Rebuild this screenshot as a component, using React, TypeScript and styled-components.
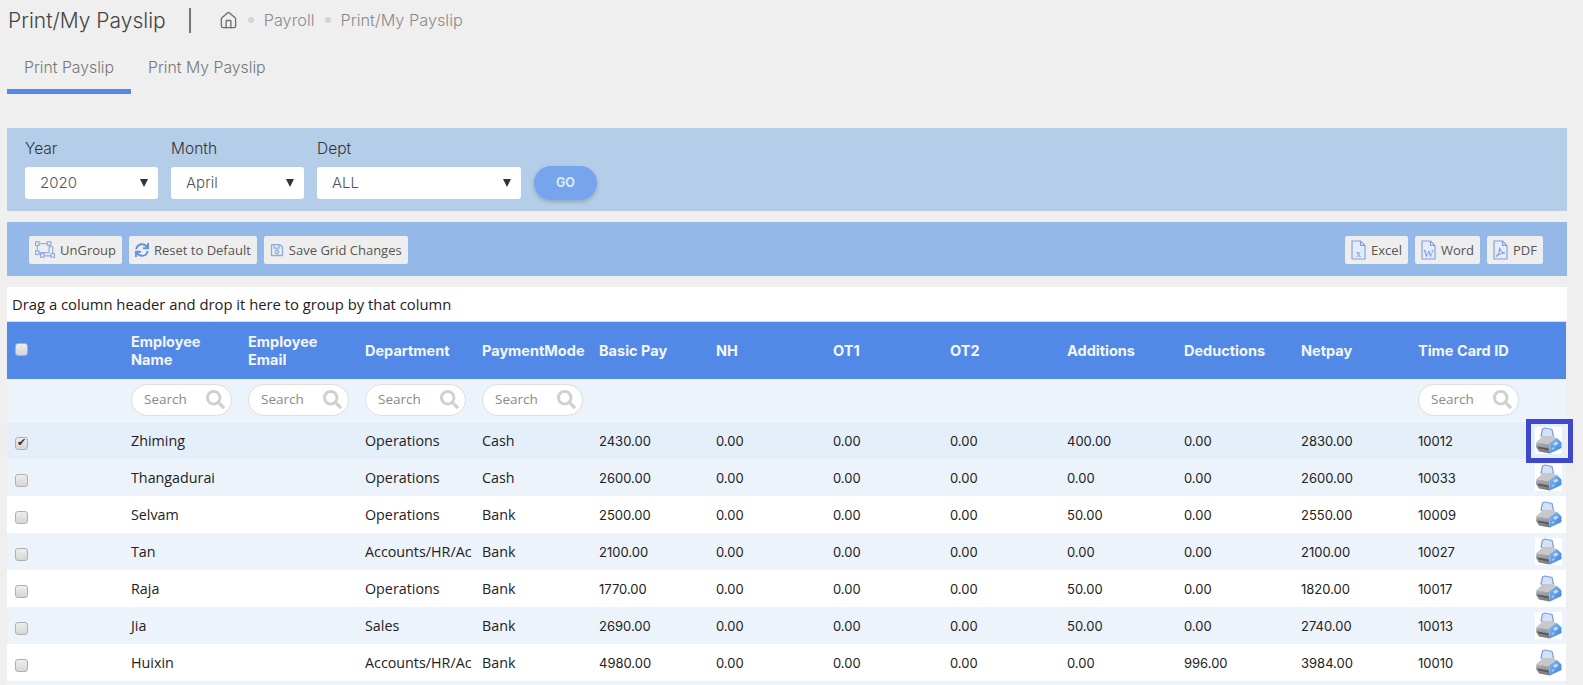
import React from 'react';
import styled, { createGlobalStyle } from 'styled-components';
import { Home } from 'lucide-react';
import { FaSync, FaRegSave, FaSearch } from 'react-icons/fa';

const sans = `"Open Sans", "Noto Sans", sans-serif`;
const geo = `Inter, "Open Sans", sans-serif`;

type Row = {
  name: string;
  dept: string;
  mode: string;
  basic: string;
  additions: string;
  deductions: string;
  net: string;
  card: string;
  checked?: boolean;
};

const rows: Row[] = [
  { name: 'Zhiming', dept: 'Operations', mode: 'Cash', basic: '2430.00', additions: '400.00', deductions: '0.00', net: '2830.00', card: '10012', checked: true },
  { name: 'Thangadurai', dept: 'Operations', mode: 'Cash', basic: '2600.00', additions: '0.00', deductions: '0.00', net: '2600.00', card: '10033' },
  { name: 'Selvam', dept: 'Operations', mode: 'Bank', basic: '2500.00', additions: '50.00', deductions: '0.00', net: '2550.00', card: '10009' },
  { name: 'Tan', dept: 'Accounts/HR/Ac', mode: 'Bank', basic: '2100.00', additions: '0.00', deductions: '0.00', net: '2100.00', card: '10027' },
  { name: 'Raja', dept: 'Operations', mode: 'Bank', basic: '1770.00', additions: '50.00', deductions: '0.00', net: '1820.00', card: '10017' },
  { name: 'Jia', dept: 'Sales', mode: 'Bank', basic: '2690.00', additions: '50.00', deductions: '0.00', net: '2740.00', card: '10013' },
  { name: 'Huixin', dept: 'Accounts/HR/Ac', mode: 'Bank', basic: '4980.00', additions: '0.00', deductions: '996.00', net: '3984.00', card: '10010' },
];

const headers = ['Employee Name', 'Employee Email', 'Department', 'PaymentMode', 'Basic Pay', 'NH', 'OT1', 'OT2', 'Additions', 'Deductions', 'Netpay', 'Time Card ID'];
const searchable = ['Employee Name', 'Employee Email', 'Department', 'PaymentMode', 'Time Card ID'];

const PrinterIcon = () => (
  <PrinterBox>
    <svg width="27" height="27" viewBox="0 0 27 27">
      <defs>
        <linearGradient id="prBody" x1="0" y1="0" x2="0" y2="1">
          <stop offset="0" stopColor="#b4b6ba" />
          <stop offset="1" stopColor="#6f7276" />
        </linearGradient>
        <linearGradient id="prBlue" x1="0" y1="0" x2="1" y2="1">
          <stop offset="0" stopColor="#86baf3" />
          <stop offset="1" stopColor="#3a82da" />
        </linearGradient>
      </defs>
      <path d="M6 9 L7.500 2 L10 1 L17 2.500 L18.500 9 L11 11 Z" fill="#d3e2f7" stroke="#7c9fd4" strokeWidth="1.2" />
      <path d="M1.500 15 L8 9 L18 9 L22 11.500 L14 17 Z" fill="#c6c8cb" />
      <path d="M1.500 15 L14 17 L15 26.500 L4 24.500 L1 20 Z" fill="url(#prBody)" />
      <path d="M2.500 19.500 L13.500 21.500 L14 23.500 L3.500 21.500 Z" fill="#55585c" />
      <path d="M14 16.500 L22 11 L26.500 15.500 L26.500 21 L15 26.500 Z" fill="url(#prBlue)" />
      <path d="M18 16.500 L21.500 14.500 L23.500 16.500 L20 19 Z" fill="#c0dcf9" />
      <path d="M16.500 21.500 L19 20 L19.500 21.500 L17 23 Z" fill="#a7cdf6" />
    </svg>
  </PrinterBox>
);

const UngroupIcon = () => (
  <svg width="20" height="17" viewBox="0 0 22 18" fill="none" stroke="#8fa9e0" strokeWidth="1.2">
    <rect x="2.500" y="2.500" width="13" height="10" />
    <path d="M8 12.500v3.500h11.500V6H15.500" />
    <rect x="0.500" y="0.500" width="4" height="4" fill="#e3e9f6" />
    <rect x="13.500" y="0.500" width="4" height="4" fill="#e3e9f6" />
    <rect x="0.500" y="10.500" width="4" height="4" fill="#e3e9f6" />
    <rect x="6" y="13.500" width="4" height="4" fill="#e3e9f6" />
    <rect x="17.500" y="13.500" width="4" height="4" fill="#e3e9f6" />
  </svg>
);

const DocIcon: React.FC<{ letter?: string }> = ({ letter }) => (
  <svg width="15" height="20" viewBox="0 0 15 20" fill="#e6ecf9" stroke="#7f9de0" strokeWidth="1.1">
    <path d="M1 1h8.500L14 5.500V19H1Z" />
    <path d="M9.500 1v4.500H14" fill="none" />
    {letter ? (
      <DocLetter x="7.500" y="17" textAnchor="middle">{letter}</DocLetter>
    ) : (
      <path d="M3 16.500c2-1.500 4-5 3.500-9 .5 3 2.500 5 5.500 5.500-3 0-6 1-9 3.500Z" fill="none" />
    )}
  </svg>
);

const App: React.FC = () => {
  return (
    <Page>
      <GlobalStyle />
      <TitleBar>
        <PageTitle>Print/My Payslip</PageTitle>
        <Crumbs>
          <Home size={19} strokeWidth={1.7} color="#6f6f6f" />
          <Dot />
          <span>Payroll</span>
          <Dot />
          <span>Print/My Payslip</span>
        </Crumbs>
      </TitleBar>
      <Tabs>
        <Tab $active>Print Payslip</Tab>
        <Tab>Print My Payslip</Tab>
      </Tabs>
      <FilterPanel>
        <Field $width={133}>
          <FieldLabel>Year</FieldLabel>
          <SelectBox>2020</SelectBox>
        </Field>
        <Field $width={133}>
          <FieldLabel>Month</FieldLabel>
          <SelectBox>April</SelectBox>
        </Field>
        <Field $width={204}>
          <FieldLabel>Dept</FieldLabel>
          <SelectBox>ALL</SelectBox>
        </Field>
        <GoButton>GO</GoButton>
      </FilterPanel>
      <Toolbar>
        <ToolGroup>
          <ToolButton><UngroupIcon />UnGroup</ToolButton>
          <ToolButton><FaSync size={14} color="#5f93e4" />Reset to Default</ToolButton>
          <ToolButton><FaRegSave size={14} color="#8fa9e0" />Save Grid Changes</ToolButton>
        </ToolGroup>
        <ToolGroup>
          <ToolButton><DocIcon letter="x" />Excel</ToolButton>
          <ToolButton><DocIcon letter="W" />Word</ToolButton>
          <ToolButton><DocIcon />PDF</ToolButton>
        </ToolGroup>
      </Toolbar>
      <GroupBar>Drag a column header and drop it here to group by that column</GroupBar>
      <Grid>
        <HeaderRow>
          <HeaderCell><GridCheck type="checkbox" /></HeaderCell>
          {headers.map((h) => (
            <HeaderCell key={h}>{h}</HeaderCell>
          ))}
          <HeaderCell />
        </HeaderRow>
        <SearchRow>
          <div />
          {headers.map((h) => (
            <div key={h}>
              {searchable.includes(h) && (
                <SearchPill>
                  Search
                  <FaSearch size={19} color="#d0d0d0" />
                </SearchPill>
              )}
            </div>
          ))}
          <div />
        </SearchRow>
        {rows.map((r, i) => (
          <DataRow key={r.card} $tone={r.checked ? 'active' : i % 2 ? 'alt' : 'plain'}>
            <Cell><RowCheck type="checkbox" defaultChecked={r.checked} /></Cell>
            <TextCell>{r.name}</TextCell>
            <TextCell />
            <TextCell>{r.dept}</TextCell>
            <TextCell>{r.mode}</TextCell>
            <Cell>{r.basic}</Cell>
            <Cell>0.00</Cell>
            <Cell>0.00</Cell>
            <Cell>0.00</Cell>
            <Cell>{r.additions}</Cell>
            <Cell>{r.deductions}</Cell>
            <Cell>{r.net}</Cell>
            <Cell>{r.card}</Cell>
            <ActionCell>
              <PrinterIcon />
              {r.checked && <Highlight />}
            </ActionCell>
          </DataRow>
        ))}
        <DataRow $tone="alt" />
      </Grid>
    </Page>
  );
};

const GlobalStyle = createGlobalStyle`
  html, body {
    margin: 0;
    height: 100%;
    overflow: hidden;
    background: #efefef;
  }
`;

const Page = styled.div`
  width: 1560px;
  padding: 0 16px 0 7px;
  font-family: ${sans};
`;

const TitleBar = styled.div`
  display: flex;
  align-items: center;
  height: 40px;
`;

const PageTitle = styled.h1`
  margin: 0;
  padding: 0 23px 0 1px;
  border-right: 2px solid #777;
  font: 300 21px ${geo};
  line-height: 25px;
  color: #444;
  white-space: nowrap;
`;

const Crumbs = styled.div`
  display: flex;
  align-items: center;
  gap: 10px;
  margin-left: 28px;
  font: 300 16.3px ${geo};
  color: #8a8a8a;
`;

const Dot = styled.i`
  width: 6px;
  height: 6px;
  border-radius: 50%;
  background: #d4d4d4;
`;

const Tabs = styled.div`
  display: flex;
  height: 54px;
  margin-bottom: 34px;
`;

const Tab = styled.div<{ $active?: boolean }>`
  padding: 0 17px;
  height: 54px;
  box-sizing: border-box;
  border-bottom: 5px solid ${(p) => (p.$active ? '#5389e6' : 'transparent')};
  font: 300 15.8px/56px ${geo};
  color: #777;
  white-space: nowrap;
`;

const FilterPanel = styled.div`
  display: flex;
  align-items: flex-end;
  gap: 13px;
  height: 83px;
  box-sizing: border-box;
  padding: 0 0 12px 18px;
  background: #b4cee9;
`;

const Field = styled.div<{ $width: number }>`
  width: ${(p) => p.$width}px;
`;

const FieldLabel = styled.div`
  margin-bottom: 9px;
  font: 300 15.5px/18px ${geo};
  color: #333;
`;

const SelectBox = styled.div`
  position: relative;
  height: 32px;
  box-sizing: border-box;
  padding-left: 15px;
  border-radius: 3px;
  background: #fff;
  font: 300 15px/32px ${geo};
  color: #555;
  &::after {
    content: '';
    position: absolute;
    right: 10px;
    top: 12px;
    border-style: solid;
    border-width: 8px 4px 0;
    border-color: #333 transparent transparent;
  }
`;

const GoButton = styled.div`
  width: 63px;
  height: 34px;
  margin-bottom: -1px;
  border-radius: 17px;
  background: #76a5ee;
  box-shadow: 0 2px 4px rgba(0, 0, 0, 0.2);
  font: 700 12.5px/34px ${geo};
  text-align: center;
  color: #dde8fa;
`;

const Toolbar = styled.div`
  display: flex;
  justify-content: space-between;
  align-items: center;
  height: 54px;
  margin-top: 11px;
  padding: 1px 24px 0 22px;
  box-sizing: border-box;
  background: #94b8e7;
`;

const ToolGroup = styled.div`
  display: flex;
  gap: 7px;
`;

const ToolButton = styled.div`
  display: flex;
  align-items: center;
  gap: 5px;
  height: 28px;
  padding: 0 6px;
  border-radius: 2px;
  background: #eeeeee;
  font: 400 13px ${sans};
  color: #555;
  white-space: nowrap;
`;

const DocLetter = styled.text`
  font: 400 11px "Liberation Serif", serif;
  fill: #6f93de;
  stroke: none;
`;

const GroupBar = styled.div`
  height: 34px;
  margin-top: 11px;
  padding-left: 5px;
  background: #fff;
  font: 400 14.8px/34px ${sans};
  color: #222;
`;

const cols = 'repeat(13, 117px) 38px';

const Grid = styled.div`
  width: 1559px;
`;

const HeaderRow = styled.div`
  display: grid;
  grid-template-columns: ${cols};
  height: 58px;
  border-top: 1px solid #d5dff0;
  box-sizing: border-box;
  background: #5389e6;
`;

const HeaderCell = styled.div`
  display: flex;
  align-items: center;
  padding: 0 7px;
  font: 700 14.5px/18px ${geo};
  color: #f2f6fd;
`;

const SearchRow = styled.div`
  display: grid;
  grid-template-columns: ${cols};
  align-items: center;
  height: 43px;
  box-sizing: border-box;
  padding-bottom: 1px;
  background: #edf3fb;
  > div {
    padding-left: 7px;
  }
`;

const SearchPill = styled.div`
  display: flex;
  justify-content: space-between;
  align-items: center;
  width: 101px;
  height: 32px;
  box-sizing: border-box;
  padding: 0 6px 2px 12px;
  border: 1px solid #dedede;
  border-radius: 16px;
  background: #fff;
  font: 400 13.5px ${sans};
  color: #888;
`;

const RowCheck = styled.input`
  appearance: none;
  display: block;
  position: relative;
  width: 13px;
  height: 13px;
  margin: 5px 0 0 1px;
  border: 1px solid #b0b0b0;
  border-radius: 3px;
  background: linear-gradient(#eeeeee, #d6d6d6);
  &:checked::after {
    content: '✔';
    position: absolute;
    left: 1px;
    top: -2px;
    font: 11px/13px "DejaVu Sans", sans-serif;
    color: #333;
  }
`;

const GridCheck = styled(RowCheck)`
  margin: 0 0 2px 1px;
`;

const toneColor = { plain: '#ffffff', alt: '#edf3fb', active: '#e5effa' };

const DataRow = styled.div<{ $tone: keyof typeof toneColor }>`
  display: grid;
  grid-template-columns: ${cols};
  align-items: center;
  height: 37px;
  background: ${(p) => toneColor[p.$tone]};
`;

const Cell = styled.div`
  padding: 0 7px;
  font: 400 13px ${geo};
  color: #222;
  white-space: nowrap;
`;

const TextCell = styled(Cell)`
  font: 400 14.3px ${sans};
  padding-right: 0;
`;

const ActionCell = styled.div`
  position: relative;
  height: 100%;
  display: flex;
  align-items: center;
  padding-left: 7px;
`;

const PrinterBox = styled.div`
  width: 27px;
  height: 27px;
  background: #fff;
`;

const Highlight = styled.div`
  position: absolute;
  left: -2px;
  top: -3px;
  width: 47px;
  height: 44px;
  box-sizing: border-box;
  border: 5px solid #3f48cc;
`;

export default App;
